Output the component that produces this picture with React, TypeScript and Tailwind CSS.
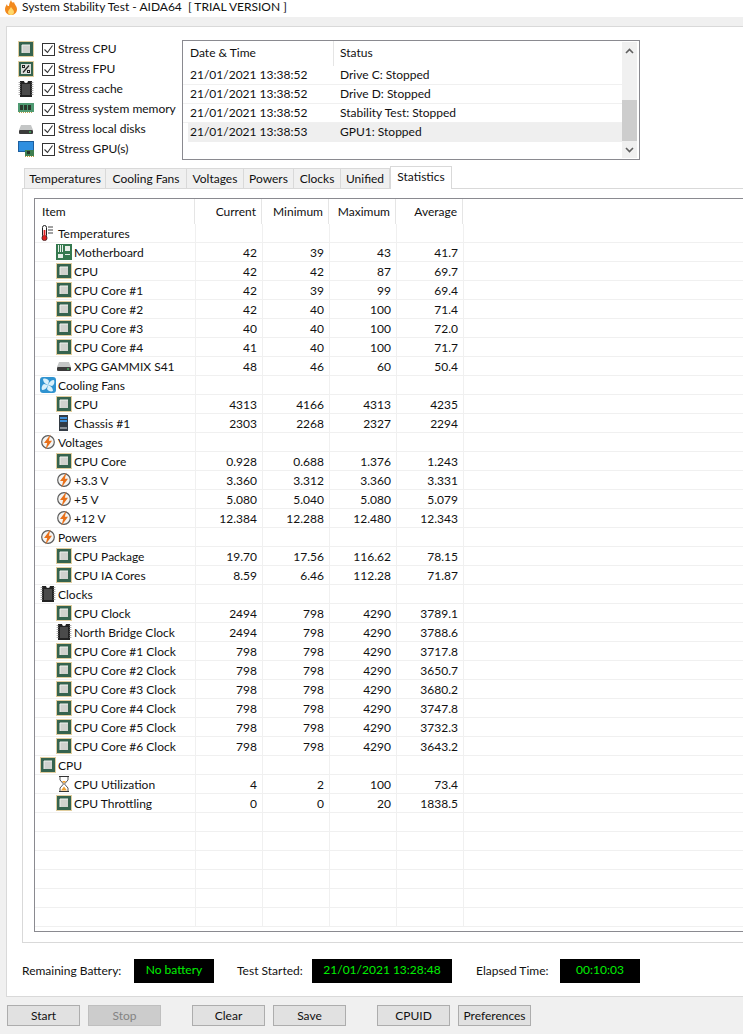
const sans = "font-['Lato','Liberation_Sans',sans-serif]"

function CpuIcon({ className = '' }: { className?: string }) {
  return (
    <svg width="16" height="16" viewBox="0 0 16 16" className={`shrink-0 ${className}`}>
      <rect x="0.5" y="0.5" width="15" height="15" fill="none" stroke="#c09a3c" strokeDasharray="1 1" />
      <rect x="1" y="1" width="14" height="14" fill="#35634e" />
      <rect x="4" y="4" width="8" height="8" fill="#d0d2ce" />
      <path d="M4 12V4h8" fill="none" stroke="#f0f2ee" />
    </svg>
  )
}

function FpuIcon() {
  return (
    <svg width="16" height="16" viewBox="0 0 16 16" className="shrink-0">
      <rect x="0.5" y="0.5" width="15" height="15" fill="none" stroke="#c09a3c" strokeDasharray="1 1" />
      <rect x="1" y="1" width="14" height="14" fill="#35634e" />
      <rect x="3" y="3" width="10" height="10" fill="#dcdedb" />
      <path d="M5 11.500l6-7" stroke="#222" strokeWidth="1.200" />
      <rect x="4.500" y="4.500" width="2" height="2" fill="none" stroke="#222" />
      <rect x="9.500" y="9.500" width="2" height="2" fill="none" stroke="#222" />
    </svg>
  )
}

function ChipIcon() {
  return (
    <svg width="16" height="16" viewBox="0 0 16 16" className="shrink-0">
      <path d="M2 0h4a2 2 0 0 0 4 0h4v16H2z" fill="#222" />
      <rect x="4" y="3" width="8" height="11" fill="#4a4a4a" />
      <path d="M1.500 1v14M14.500 1v14" stroke="#aaa" strokeWidth="1.800" strokeDasharray="1 1" />
    </svg>
  )
}

function RamIcon() {
  return (
    <svg width="16" height="16" viewBox="0 0 16 16" className="shrink-0">
      <rect x="0" y="2" width="16" height="9" fill="#4f9a72" />
      <rect x="2" y="4" width="3" height="5" fill="#2c3a2e" />
      <rect x="6" y="4" width="3" height="5" fill="#2c3a2e" />
      <rect x="10" y="4" width="3" height="5" fill="#2c3a2e" />
      <path d="M1 11.500h14" stroke="#b8a04c" strokeDasharray="1 1" />
    </svg>
  )
}

function DiskIcon() {
  return (
    <svg width="16" height="16" viewBox="0 0 16 16" className="shrink-0">
      <path d="M3 4h10l2 5H1z" fill="#c4c6c6" />
      <rect x="1" y="9" width="14" height="4" rx="1" fill="#3b3b3b" />
      <rect x="11" y="10.500" width="2" height="1" fill="#45e06a" />
    </svg>
  )
}

function GpuIcon() {
  return (
    <svg width="16" height="16" viewBox="0 0 16 16" className="shrink-0">
      <rect x="0.500" y="0.500" width="15" height="10" fill="#2f8fe0" stroke="#1d5f9f" />
      <rect x="7" y="9" width="9" height="6" fill="#3f7f50" />
      <rect x="9" y="10" width="3" height="3" fill="#26352a" />
      <path d="M7 15.500h9" stroke="#c09a3c" strokeDasharray="1 1" />
    </svg>
  )
}

function ThermoIcon() {
  return (
    <svg width="16" height="16" viewBox="0 0 16 16" className="shrink-0">
      <rect x="2.500" y="0.500" width="4" height="12" rx="2" fill="#fff" stroke="#222" />
      <circle cx="4.500" cy="13" r="2.600" fill="#e02020" stroke="#222" strokeWidth="0.700" />
      <rect x="3.600" y="5" width="1.800" height="8" fill="#e02020" />
      <path d="M8 2h5M8 5h5M8 8h5" stroke="#444" />
    </svg>
  )
}

function BoardIcon() {
  return (
    <svg width="16" height="16" viewBox="0 0 16 16" className="shrink-0">
      <rect x="0" y="0" width="16" height="16" fill="#35794f" />
      <path d="M2.500 1v7M4.500 1v7M6.500 1v7" stroke="#e8efe9" />
      <rect x="9" y="2" width="5" height="5" fill="#e8efe9" />
      <rect x="2" y="10" width="5" height="4" fill="#e8efe9" />
      <rect x="9" y="10" width="5" height="1" fill="#e8efe9" />
    </svg>
  )
}

function FanIcon() {
  return (
    <svg width="16" height="16" viewBox="0 0 16 16" className="shrink-0">
      <rect x="0" y="0" width="16" height="16" rx="3" fill="#2f93d0" />
      <g fill="#d9f0fa">
        <path d="M8 8C5 7 3 5 3 2c2-1 5 0 6 2z" />
        <path d="M8 8c1-3 3-5 6-5 1 2 0 5-2 6z" />
        <path d="M8 8c3 1 5 3 5 6-2 1-5 0-6-2z" />
        <path d="M8 8c-1 3-3 5-6 5-1-2 0-5 2-6z" />
      </g>
    </svg>
  )
}

function BoltIcon() {
  return (
    <svg width="16" height="16" viewBox="0 0 16 16" className="shrink-0">
      <circle cx="8" cy="8" r="6.300" fill="#f4f4f2" stroke="#5c5c5c" strokeWidth="1.200" />
      <path d="M10.500 0.500L4 9h3.200L5.500 15.500 12 6.800H8.800z" fill="#e8701a" />
    </svg>
  )
}

function ServerIcon() {
  return (
    <svg width="16" height="16" viewBox="0 0 16 16" className="shrink-0">
      <rect x="3" y="0" width="9" height="16" fill="#333b44" />
      <rect x="4" y="2" width="7" height="2" fill="#3f8fd8" />
      <rect x="4" y="5" width="7" height="2" fill="#3f8fd8" />
      <rect x="4" y="12" width="7" height="2" fill="#8a9096" />
    </svg>
  )
}

function HourglassIcon() {
  return (
    <svg width="16" height="16" viewBox="0 0 16 16" className="shrink-0">
      <path d="M3 0.500h10M3 15.500h10" stroke="#333" />
      <path d="M4 1v3l3.500 4L4 12v3M12 1v3L8.500 8l3.500 4v3" fill="none" stroke="#555" />
      <path d="M5 14.500L8 10.500l3 4z" fill="#f0a030" />
      <path d="M6 5h4L8 7.500z" fill="#f0a030" />
    </svg>
  )
}

function FlameIcon() {
  return (
    <svg width="16" height="16" viewBox="0 0 16 16" className="shrink-0">
      <path d="M8 0c1 3 2 3 3 2 0 2 3 4 3 7 0 4-3 6-6 6s-6-2-6-6c0-2 1-3 2-5 0 2 1 2 2 2 0-2 1-4 2-6z" fill="#f28a1e" />
      <path d="M8 7c1 2 3 3 3 5 0 2-1.500 3-3 3s-3-1-3-3c0-1 1-2 3-5z" fill="#ffd86a" />
    </svg>
  )
}

const stress = [
  { label: 'Stress CPU', icon: <CpuIcon /> },
  { label: 'Stress FPU', icon: <FpuIcon /> },
  { label: 'Stress cache', icon: <ChipIcon /> },
  { label: 'Stress system memory', icon: <RamIcon /> },
  { label: 'Stress local disks', icon: <DiskIcon /> },
  { label: 'Stress GPU(s)', icon: <GpuIcon /> },
]

const logRows = [
  { time: '21/01/2021 13:38:52', status: 'Drive C: Stopped' },
  { time: '21/01/2021 13:38:52', status: 'Drive D: Stopped' },
  { time: '21/01/2021 13:38:52', status: 'Stability Test: Stopped' },
  { time: '21/01/2021 13:38:53', status: 'GPU1: Stopped', selected: true },
]

const tabs = [
  { label: 'Temperatures', w: 'w-[82px]' },
  { label: 'Cooling Fans', w: 'w-[81px]' },
  { label: 'Voltages', w: 'w-[57px]' },
  { label: 'Powers', w: 'w-[50px]' },
  { label: 'Clocks', w: 'w-[47px]' },
  { label: 'Unified', w: 'w-[49px]' },
]

type Row = { name: string; icon: React.ReactNode; top?: boolean; vals?: string[] }

const cpu = <CpuIcon />
const bolt = <BoltIcon />

const rows: Row[] = [
  { name: 'Temperatures', icon: <ThermoIcon />, top: true },
  { name: 'Motherboard', icon: <BoardIcon />, vals: ['42', '39', '43', '41.7'] },
  { name: 'CPU', icon: cpu, vals: ['42', '42', '87', '69.7'] },
  { name: 'CPU Core #1', icon: cpu, vals: ['42', '39', '99', '69.4'] },
  { name: 'CPU Core #2', icon: cpu, vals: ['42', '40', '100', '71.4'] },
  { name: 'CPU Core #3', icon: cpu, vals: ['40', '40', '100', '72.0'] },
  { name: 'CPU Core #4', icon: cpu, vals: ['41', '40', '100', '71.7'] },
  { name: 'XPG GAMMIX S41', icon: <DiskIcon />, vals: ['48', '46', '60', '50.4'] },
  { name: 'Cooling Fans', icon: <FanIcon />, top: true },
  { name: 'CPU', icon: cpu, vals: ['4313', '4166', '4313', '4235'] },
  { name: 'Chassis #1', icon: <ServerIcon />, vals: ['2303', '2268', '2327', '2294'] },
  { name: 'Voltages', icon: bolt, top: true },
  { name: 'CPU Core', icon: cpu, vals: ['0.928', '0.688', '1.376', '1.243'] },
  { name: '+3.3 V', icon: bolt, vals: ['3.360', '3.312', '3.360', '3.331'] },
  { name: '+5 V', icon: bolt, vals: ['5.080', '5.040', '5.080', '5.079'] },
  { name: '+12 V', icon: bolt, vals: ['12.384', '12.288', '12.480', '12.343'] },
  { name: 'Powers', icon: bolt, top: true },
  { name: 'CPU Package', icon: cpu, vals: ['19.70', '17.56', '116.62', '78.15'] },
  { name: 'CPU IA Cores', icon: cpu, vals: ['8.59', '6.46', '112.28', '71.87'] },
  { name: 'Clocks', icon: <ChipIcon />, top: true },
  { name: 'CPU Clock', icon: cpu, vals: ['2494', '798', '4290', '3789.1'] },
  { name: 'North Bridge Clock', icon: <ChipIcon />, vals: ['2494', '798', '4290', '3788.6'] },
  { name: 'CPU Core #1 Clock', icon: cpu, vals: ['798', '798', '4290', '3717.8'] },
  { name: 'CPU Core #2 Clock', icon: cpu, vals: ['798', '798', '4290', '3650.7'] },
  { name: 'CPU Core #3 Clock', icon: cpu, vals: ['798', '798', '4290', '3680.2'] },
  { name: 'CPU Core #4 Clock', icon: cpu, vals: ['798', '798', '4290', '3747.8'] },
  { name: 'CPU Core #5 Clock', icon: cpu, vals: ['798', '798', '4290', '3732.3'] },
  { name: 'CPU Core #6 Clock', icon: cpu, vals: ['798', '798', '4290', '3643.2'] },
  { name: 'CPU', icon: cpu, top: true },
  { name: 'CPU Utilization', icon: <HourglassIcon />, vals: ['4', '2', '100', '73.4'] },
  { name: 'CPU Throttling', icon: cpu, vals: ['0', '0', '20', '1838.5'] },
]

// 그리드 아래쪽 빈 행
const emptyRows = Array.from({ length: 6 })

function DataRow({ row }: { row?: Row }) {
  const vals = row?.vals ?? ['', '', '', '']
  return (
    <div className="flex h-[19px] border-b border-[#f0f0f0]">
      <div className={`flex w-[161px] shrink-0 items-center border-r border-[#f0f0f0] ${row?.top ? 'pl-[5px]' : 'pl-[21px]'}`}>
        {row?.icon}
        <span className="ml-[2px] whitespace-nowrap pt-[1px]">{row?.name}</span>
      </div>
      {vals.map((v, i) => (
        <div key={i} className="flex w-[67px] shrink-0 items-center justify-end border-r border-[#f0f0f0] pt-[1px] pr-[5px]">
          {v}
        </div>
      ))}
    </div>
  )
}

function Btn({ label, disabled }: { label: string; disabled?: boolean }) {
  return (
    <div
      className={`flex h-[21px] w-[73px] items-center justify-center border ${
        disabled ? 'border-[#bfbfbf] bg-[#cccccc] text-[#838383]' : 'border-[#adadad] bg-[#e1e1e1]'
      }`}
    >
      {label}
    </div>
  )
}

export default function App() {
  return (
    <div className={`flex h-[1034px] w-[743px] flex-col overflow-hidden bg-[#f0f0f0] text-[12px] leading-none text-[#111] ${sans}`}>
      {/* 타이틀바 */}
      <div className="flex h-[17px] shrink-0 items-start bg-white pl-[3px]">
        <FlameIcon />
        <span className="ml-[3px] pt-[1px] whitespace-pre">System Stability Test - AIDA64  [ TRIAL VERSION ]</span>
      </div>

      {/* 본문 패널 */}
      <div className="mt-[9px] ml-[6px] flex h-[971px] shrink-0 flex-col border-t border-b border-l border-[#d9d9d9] bg-white">
        <div className="flex h-[131px] shrink-0 pt-[11px] pl-[11px]">
          <div className="mt-[1px] w-[164px] shrink-0">
            {stress.map((s) => (
              <div key={s.label} className="flex h-[20px] items-center">
                {s.icon}
                <div className="ml-[8px] flex h-[13px] w-[13px] shrink-0 items-center justify-center border border-[#333] bg-white">
                  <svg width="11" height="11" viewBox="0 0 11 11">
                    <path d="M1.500 5.500l3 3 5-7" fill="none" stroke="#333" strokeWidth="1.100" />
                  </svg>
                </div>
                <span className="ml-[3px] whitespace-nowrap pb-[1px]">{s.label}</span>
              </div>
            ))}
          </div>

          {/* 로그 박스 */}
          <div className="mt-[2px] flex h-[120px] w-[458px] shrink-0 border border-[#8a8a90]">
            <div className="w-[439px] shrink-0">
              <div className="flex h-[25px] items-center">
                <div className="flex h-full w-[151px] items-center border-r border-[#e5e5e5] pb-[1px] pl-[7px]">Date &amp; Time</div>
                <div className="pb-[1px] pl-[6px]">Status</div>
              </div>
              {logRows.map((r) => (
                <div
                  key={r.status}
                  className={`flex h-[19px] items-center border-b ${r.selected ? 'ml-[5px] border-[#efefef] bg-[#efefef]' : 'border-[#f0f0f0]'}`}
                >
                  <div className={`${r.selected ? 'w-[146px] pl-[2px]' : 'w-[151px] pl-[7px]'}`}>{r.time}</div>
                  <div className="pl-[6px]">{r.status}</div>
                </div>
              ))}
            </div>
            <div className="mt-[1px] flex h-[116px] w-[15px] flex-col bg-[#f0f0f0]">
              <div className="flex h-[17px] items-center justify-center">
                <svg width="9" height="6" viewBox="0 0 9 6"><path d="M1 5l3.500-3.500L8 5" fill="none" stroke="#606060" strokeWidth="1.600" /></svg>
              </div>
              <div className="mt-[41px] h-[41px] bg-[#cdcdcd]" />
              <div className="flex h-[17px] items-center justify-center">
                <svg width="9" height="6" viewBox="0 0 9 6"><path d="M1 1l3.500 3.500L8 1" fill="none" stroke="#606060" strokeWidth="1.600" /></svg>
              </div>
            </div>
          </div>
        </div>

        {/* 탭 */}
        <div className="flex h-[30px] shrink-0 items-end pl-[17px]">
          {tabs.map((t) => (
            <div
              key={t.label}
              className={`flex h-[20px] ${t.w} shrink-0 items-center justify-center border-t border-r border-[#d9d9d9] bg-[#f0f0f0] pt-[1px] first:border-l`}
            >
              {t.label}
            </div>
          ))}
          <div className="relative top-[1px] flex h-[23px] w-[62px] shrink-0 items-center justify-center border-x border-t border-[#d9d9d9] bg-white pb-[2px]">
            Statistics
          </div>
        </div>

        {/* 탭 내용 */}
        <div className="ml-[15px] flex h-[755px] shrink-0 flex-col border-t border-b border-l border-[#d9d9d9] pt-[9px] pl-[11px]">
          <div className="h-[734px] shrink-0 overflow-hidden border-t border-b border-l border-[#8a8a90]">
            <div className="flex h-[25px] items-center">
              <div className="flex h-full w-[160px] shrink-0 items-center border-r border-[#e5e5e5] pl-[7px]">Item</div>
              {['Current', 'Minimum', 'Maximum', 'Average'].map((h) => (
                <div key={h} className="flex h-full w-[67px] shrink-0 items-center justify-end border-r border-[#e5e5e5] pr-[5px]">
                  {h}
                </div>
              ))}
            </div>
            {rows.map((r, i) => (
              <DataRow key={i} row={r} />
            ))}
            {emptyRows.map((_, i) => (
              <DataRow key={i} />
            ))}
          </div>
        </div>

        {/* 상태 표시 */}
        <div className="mt-[16px] flex h-[24px] shrink-0 items-center pl-[15px]">
          <span className="w-[112px] whitespace-nowrap">Remaining Battery:</span>
          <div className="flex h-[24px] w-[80px] items-center justify-center bg-black pb-[2px] text-[#00f000]">No battery</div>
          <span className="ml-[23px] w-[75px] whitespace-nowrap">Test Started:</span>
          <div className="flex h-[24px] w-[140px] items-center justify-center bg-black pb-[2px] text-[#00f000]">21/01/2021 13:28:48</div>
          <span className="ml-[24px] w-[84px] whitespace-nowrap">Elapsed Time:</span>
          <div className="flex h-[24px] w-[80px] items-center justify-center bg-black pb-[2px] text-[#00f000]">00:10:03</div>
        </div>
      </div>

      {/* 하단 버튼 */}
      <div className="mt-[8px] flex shrink-0 pl-[7px]">
        <div className="flex gap-[8px]">
          <Btn label="Start" />
          <Btn label="Stop" disabled />
        </div>
        <div className="ml-[31px] flex gap-[8px]">
          <Btn label="Clear" />
          <Btn label="Save" />
        </div>
        <div className="ml-[31px] flex gap-[8px]">
          <Btn label="CPUID" />
          <Btn label="Preferences" />
        </div>
      </div>
    </div>
  )
}
